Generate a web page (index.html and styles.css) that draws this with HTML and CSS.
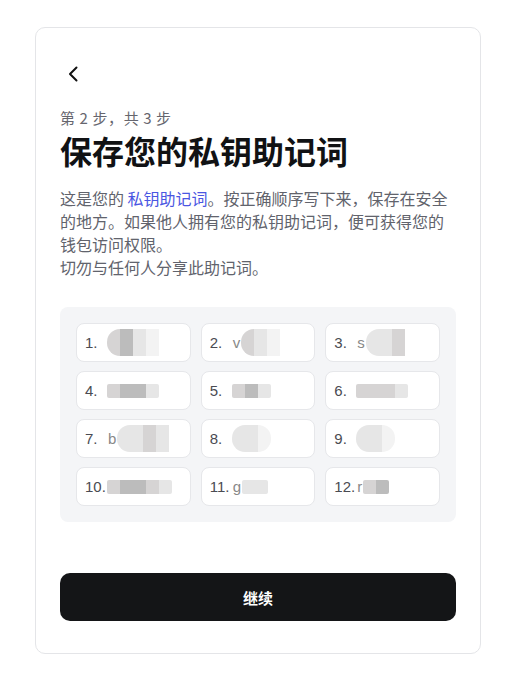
FILE: index.html
```html
<!DOCTYPE html>
<html lang="zh">
<head>
<meta charset="utf-8">
<link rel="stylesheet" href="styles.css">
</head>
<body>
<div class="card">
  <button class="back" aria-label="返回">
    <svg width="24" height="24" viewBox="0 0 24 24"><path d="M15.5 5.5 L9 12 L15.5 18.5" fill="none" stroke="#111" stroke-width="2" stroke-linecap="round" stroke-linejoin="round"/></svg>
  </button>
  <div class="step">第 2 步，共 3 步</div>
  <h1 class="title">保存您的私钥助记词</h1>
  <p class="desc">这是您的 <a class="link">私钥助记词</a>。按正确顺序写下来，保存在安全的地方。如果他人拥有您的私钥助记词，便可获得您的钱包访问权限。<br>切勿与任何人分享此助记词。</p>
  <div class="grid">
    <div class="cell"><span class="num">1.</span><span class="blur"><i class="b2"></i><i class="b3"></i><i class="b1"></i><i class="b0"></i></span></div>
    <div class="cell"><span class="num">2.</span><span class="ch">v</span><span class="blur"><i class="b2"></i><i class="b1"></i><i class="b0"></i></span></div>
    <div class="cell"><span class="num">3.</span><span class="ch">s</span><span class="blur"><i class="b1"></i><i class="b1"></i><i class="b2"></i></span></div>
    <div class="cell"><span class="num">4.</span><span class="blur flat"><i class="b2"></i><i class="b3"></i><i class="b3"></i><i class="b1"></i></span></div>
    <div class="cell"><span class="num">5.</span><span class="blur flat"><i class="b2"></i><i class="b3"></i><i class="b1"></i></span></div>
    <div class="cell"><span class="num">6.</span><span class="blur flat"><i class="b2"></i><i class="b2"></i><i class="b2"></i><i class="b1"></i></span></div>
    <div class="cell"><span class="num">7.</span><span class="ch">b</span><span class="blur"><i class="b1"></i><i class="b1"></i><i class="b2"></i><i class="b1"></i></span></div>
    <div class="cell"><span class="num">8.</span><span class="blur round"><i class="b1"></i><i class="b1"></i><i class="b0"></i></span></div>
    <div class="cell"><span class="num">9.</span><span class="blur round"><i class="b1"></i><i class="b1"></i><i class="b0"></i></span></div>
    <div class="cell"><span class="num">10.</span><span class="blur flat"><i class="b2"></i><i class="b3"></i><i class="b3"></i><i class="b2"></i><i class="b1"></i></span></div>
    <div class="cell"><span class="num">11.</span><span class="ch">g</span><span class="blur flat"><i class="b1"></i><i class="b1"></i></span></div>
    <div class="cell"><span class="num">12.</span><span class="ch">r</span><span class="blur flat"><i class="b2"></i><i class="b3"></i></span></div>
  </div>
  <button class="continue">继续</button>
</div>
</body>
</html>
```
FILE: styles.css
```css
* { box-sizing: border-box; }
html, body { margin: 0; padding: 0; background: #ffffff; }
body {
  font-family: "Liberation Sans", "Noto Sans CJK SC", sans-serif;
  padding: 27px 41px 27px 35px;
}
.card {
  width: 446px;
  height: 627px;
  border: 1px solid #e4e5e8;
  border-radius: 10px;
  padding: 34px 24px 0 24px;
  display: flex;
  flex-direction: column;
  background: #fff;
}
.back {
  width: 24px;
  height: 24px;
  padding: 0;
  margin: 0 0 0 1px;
  border: none;
  background: none;
  display: block;
}
.back svg { display: block; }
.step {
  margin-top: 22px;
  font-size: 15px;
  line-height: 20px;
  letter-spacing: 0.6px;
  color: #66666e;
  font-family: "Noto Sans CJK SC", sans-serif;
}
.title {
  margin: 3px 0 0 0;
  font-size: 32px;
  line-height: 38px;
  font-weight: 700;
  color: #111214;
  font-family: "Noto Sans CJK SC", sans-serif;
}
.desc {
  margin: 18px 0 0 0;
  font-size: 16px;
  line-height: 23px;
  color: #61636c;
  font-family: "Noto Sans CJK SC", sans-serif;
}
.link { color: #4a56e2; }
.grid {
  margin-top: 28px;
  background: #f4f5f7;
  border-radius: 8px;
  padding: 16px;
  display: grid;
  grid-template-columns: repeat(3, 1fr);
  column-gap: 10px;
  row-gap: 9px;
}
.cell {
  height: 39px;
  background: #fff;
  border: 1px solid #e6e7ea;
  border-radius: 8px;
  display: flex;
  align-items: center;
  padding-left: 8px;
  font-size: 15px;
  color: #4a4b52;
  overflow: hidden;
}
.num { width: 22px; flex: none; }
.ch { color: #888; margin-left: 1px; margin-right: 1px; flex: none; }
.blur {
  display: flex;
  height: 27px;
  border-radius: 13px 0 0 13px;
  overflow: hidden;
  filter: blur(0.6px);
}
.blur.flat { height: 14px; border-radius: 2px; }
.blur.round { border-radius: 13px; }
.blur i { display: block; width: 13px; height: 100%; }
.b0 { background: #f3f3f3; }
.b1 { background: #e6e6e6; }
.b2 { background: #d6d4d4; }
.b3 { background: #bcbcbc; }
.continue {
  margin-top: 51px;
  height: 48px;
  width: 100%;
  border: none;
  border-radius: 10px;
  background: #141517;
  color: #fff;
  font-size: 15px;
  font-weight: 700;
  font-family: "Noto Sans CJK SC", sans-serif;
}
```
